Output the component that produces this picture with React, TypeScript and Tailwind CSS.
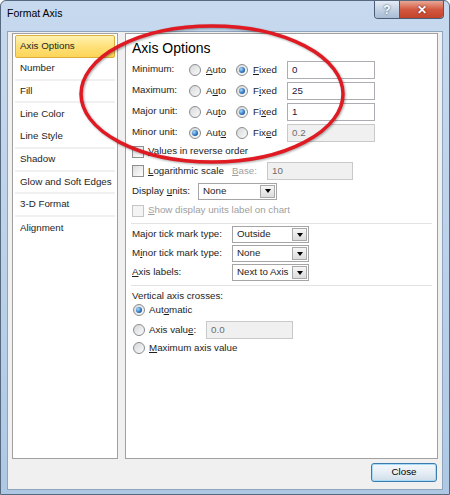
import type { ReactNode } from "react";

function Radio({ checked }: { checked?: boolean }) {
  return (
    <span className="flex h-[12px] w-[12px] shrink-0 items-center justify-center rounded-full border border-[#8a8c8f] bg-linear-to-br from-[#d6d7d9] to-[#fbfbfb]">
      {checked && (
        <span className="h-[6px] w-[6px] rounded-full bg-[radial-gradient(circle_at_35%_35%,#a8dbff,#2a6fb8_60%,#123f7a)]" />
      )}
    </span>
  );
}

function Check({ disabled }: { disabled?: boolean }) {
  return (
    <span
      className={
        disabled
          ? "h-[12px] w-[12px] shrink-0 border border-[#c5c5c5] bg-[#f4f4f4]"
          : "h-[12px] w-[12px] shrink-0 border border-[#8e8f8f] bg-linear-to-br from-[#dcdcdc] to-white"
      }
    />
  );
}

function Select({ value, width }: { value: string; width: string }) {
  return (
    <div className={`flex h-[17px] items-stretch border border-[#a5a5a5] bg-white ${width}`}>
      <span className="flex flex-1 items-center pl-[4px]">{value}</span>
      <span className="m-[1px] flex w-[15px] items-center justify-center border border-[#a9a9a9] bg-linear-to-b from-[#f6f6f6] to-[#dcdcdc]">
        <span className="h-0 w-0 border-x-[3px] border-t-[4px] border-x-transparent border-t-black" />
      </span>
    </div>
  );
}

function AxisRow({ label, auto, fixed, value, minor }: { label: string; auto: ReactNode; fixed: ReactNode; value: string; minor?: boolean }) {
  return (
    <div className="flex h-[18px] items-center">
      <span className="w-[57px] -mt-[2px]">{label}</span>
      <div className="flex w-[47px] items-center gap-[5px]">
        <Radio checked={minor} />
        <span>{auto}</span>
      </div>
      <div className="flex w-[51px] items-center gap-[5px]">
        <Radio checked={!minor} />
        <span>{fixed}</span>
      </div>
      <div
        className={
          minor
            ? "flex h-[18px] w-[88px] items-center border border-[#c9c9c9] bg-[#f0f0f0] px-[4px] text-[#6d6d6d]"
            : "flex h-[18px] w-[88px] items-center border border-[#abadb3] bg-white px-[4px] text-[#1a1a40]"
        }
      >
        {value}
      </div>
    </div>
  );
}

const navItems = [
  { name: "Axis Options", line: false },
  { name: "Number", line: true },
  { name: "Fill", line: true },
  { name: "Line Color", line: false },
  { name: "Line Style", line: true },
  { name: "Shadow", line: true },
  { name: "Glow and Soft Edges", line: true },
  { name: "3-D Format", line: true },
  { name: "Alignment", line: false },
];

export default function App() {
  return (
    <div className="relative h-[495px] w-[450px] overflow-hidden rounded-t-[6px] border border-[#56697f] bg-linear-to-b from-[#c6d9ee] via-[#bcd2ea] to-[#aec8e4] font-['Segoe_UI','Liberation_Sans',Arial,sans-serif] text-[9.75px] text-[#1e1e1e]">
      {/* title bar */}
      <div className="flex h-[30px] items-start">
        <span className="ml-[6px] mt-[5px] text-[10.5px] text-black">Format Axis</span>
        <div className="ml-auto mr-[5px] flex h-[18px] overflow-hidden rounded-b-[4px] border border-t-0 border-[#4b5d74]">
          <div className="flex w-[25px] items-center justify-center border-r border-[#4b5d74] bg-linear-to-b from-[#e4ecf6] via-[#c3d2e4] to-[#a9bcd4] text-[12px] font-bold text-white [text-shadow:0_0_2px_#2b3a4e]">
            ?
          </div>
          <div className="flex w-[43px] items-center justify-center bg-linear-to-b from-[#e8a796] via-[#d2583f] to-[#c3432a] text-[12px] font-bold text-white [text-shadow:0_0_2px_#5a1208]">
            ✕
          </div>
        </div>
      </div>

      {/* client */}
      <div className="mx-[6px] flex h-[459px] flex-col border border-[#8fa4bd] bg-[#f0f0f0]">
        <div className="ml-[4px] mt-[1px] flex h-[426px] gap-[7px]">
          {/* nav */}
          <div className="w-[106px] border border-[#a0a0a0] bg-white px-[2px] pt-[1px]">
            {navItems.map((item, i) =>
              i === 0 ? (
                <div
                  key={item.name}
                  className="flex h-[22.75px] items-center rounded-[2px] border border-[#dcae3c] bg-linear-to-b from-[#fff2b0] via-[#fee17a] to-[#fdd457] pl-[4px]"
                >
                  {item.name}
                </div>
              ) : (
                <div
                  key={item.name}
                  className={
                    item.line
                      ? "flex h-[22.75px] items-center border-b-2 border-[#f0f0f0] pl-[5px]"
                      : "flex h-[22.75px] items-center pl-[5px]"
                  }
                >
                  {item.name}
                </div>
              )
            )}
          </div>

          {/* options panel */}
          <div className="w-[313px] border border-[#a0a0a0] bg-white pl-[6px] pt-[3px]">
            <div className="h-[22px] text-[14px] leading-[22px] text-black">Axis Options</div>
            <div className="mt-[2px] flex flex-col gap-[3px]">
              <AxisRow label="Minimum:" auto={<><u>A</u>uto</>} fixed={<><u>F</u>ixed</>} value="0" />
              <AxisRow label="Maximum:" auto={<>A<u>u</u>to</>} fixed={<>F<u>i</u>xed</>} value="25" />
              <AxisRow label="Major unit:" auto={<>Au<u>t</u>o</>} fixed={<>Fi<u>x</u>ed</>} value="1" />
              <AxisRow label="Minor unit:" auto={<>Aut<u>o</u></>} fixed={<>Fix<u>e</u>d</>} value="0.2" minor />
            </div>

            <div className="mt-[1px] flex h-[17px] items-center gap-[4px]">
              <Check />
              <span>
                <u>V</u>alues in reverse order
              </span>
            </div>

            <div className="mt-[2px] flex h-[18px] items-center">
              <Check />
              <span className="ml-[4px] w-[84px]">
                <u>L</u>ogarithmic scale
              </span>
              <span className="w-[35px] text-[#a0a0a0]">
                <u>B</u>ase:
              </span>
              <div className="flex h-[18px] w-[86px] items-center border border-[#c9c9c9] bg-[#f0f0f0] px-[4px] text-[#6d6d6d]">10</div>
            </div>

            <div className="mt-[2px] flex h-[18px] items-center">
              <span className="w-[66px]">
                Display <u>u</u>nits:
              </span>
              <Select value="None" width="w-[79px]" />
            </div>

            <div className="mt-[2px] flex h-[17px] items-center gap-[4px] text-[#a0a0a0]">
              <Check disabled />
              <span>
                <u>S</u>how display units label on chart
              </span>
            </div>

            <div className="-ml-[1px] mr-[5px] mt-[4px] h-[2px] border-t border-[#e3e3e3] bg-white" />

            <div className="mt-[1px] flex flex-col gap-[2px]">
              <div className="flex items-center">
                <span className="w-[100px]">Major tick mark type:</span>
                <Select value="Outside" width="w-[77px]" />
              </div>
              <div className="flex items-center">
                <span className="w-[100px]">
                  M<u>i</u>nor tick mark type:
                </span>
                <Select value="None" width="w-[77px]" />
              </div>
              <div className="flex items-center">
                <span className="w-[100px]">
                  <u>A</u>xis labels:
                </span>
                <Select value="Next to Axis" width="w-[77px]" />
              </div>
            </div>

            <div className="-ml-[1px] mr-[5px] mt-[4px] h-[2px] border-t border-[#e3e3e3] bg-white" />

            <div className="mt-[3px] flex h-[12px] items-center">Vertical axis crosses:</div>
            <div className="flex h-[16px] items-center gap-[4px] pl-[1px]">
              <Radio checked />
              <span>
                Aut<u>o</u>matic
              </span>
            </div>
            <div className="mt-[3px] flex h-[18px] items-center pl-[1px]">
              <Radio />
              <span className="ml-[4px] w-[57px]">
                Axis valu<u>e</u>:
              </span>
              <div className="flex h-[18px] w-[87px] items-center border border-[#c9c9c9] bg-[#f0f0f0] px-[4px] text-[#6d6d6d]">0.0</div>
            </div>
            <div className="mt-[1px] flex h-[16px] items-center gap-[4px] pl-[1px]">
              <Radio />
              <span>
                <u>M</u>aximum axis value
              </span>
            </div>
          </div>
        </div>

        <div className="mr-[5px] mt-[4px] flex justify-end">
          <button className="flex h-[19px] w-[66px] items-center justify-center rounded-[3px] border border-[#3d7bad] bg-linear-to-b from-[#f4f8fb] via-[#e6eef5] to-[#cfdde9] text-[9.75px] text-black shadow-[inset_0_0_0_1px_#a6dcf7]">
            Close
          </button>
        </div>
      </div>

      {/* red annotation ellipse */}
      <svg className="pointer-events-none absolute left-0 top-0" width="450" height="495">
        <ellipse
          cx="211"
          cy="93"
          rx="131"
          ry="68"
          fill="none"
          stroke="#e01a22"
          strokeWidth="3.5"
          style={{ filter: "drop-shadow(1px 1px 1px rgba(0,0,0,0.35))" }}
        />
      </svg>
    </div>
  );
}
